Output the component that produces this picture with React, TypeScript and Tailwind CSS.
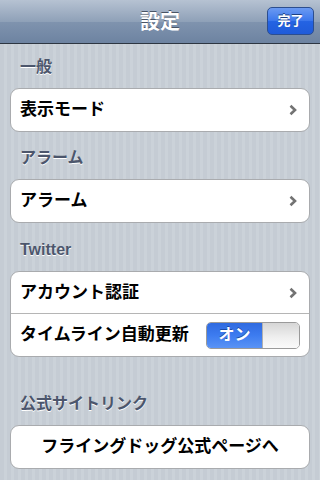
import React from "react";

const Chevron = () => (
  <svg width="8" height="12" viewBox="0 0 8 12" className="shrink-0">
    <path d="M1.5 1.8 L6 6 L1.5 10.2" fill="none" stroke="#737373" strokeWidth="2.6" strokeLinecap="butt" strokeLinejoin="miter" />
  </svg>
);

const Header = ({ children, first }: { children: React.ReactNode; first?: string }) => (
  <div
    className={`h-[20px] mb-[11px] pl-[10px] flex items-center text-[16px] font-bold text-[#4c566c] [text-shadow:0_1px_0_#ffffff] ${first ?? ""}`}
  >
    {children}
  </div>
);

const Group = ({ children }: { children: React.ReactNode }) => (
  <div className="bg-white border border-[#a9abae] rounded-[9px] overflow-hidden">{children}</div>
);

const Row = ({ label, chevron, divider }: { label: string; chevron?: boolean; divider?: boolean }) => (
  <div className={`h-[42px] flex items-center justify-between pl-[9px] pr-[12px] ${divider ? "border-b border-[#b5b5b5]" : ""}`}>
    <span className="text-[17px] font-bold text-black">{label}</span>
    {chevron && <Chevron />}
  </div>
);

export default function App() {
  return (
    <div
      className="w-[320px] h-[480px] overflow-hidden bg-[repeating-linear-gradient(90deg,#c5ccd4_0px,#c5ccd4_4px,#cbd2d9_4px,#cbd2d9_7px)]"
      style={{ fontFamily: '"Liberation Sans", "Noto Sans CJK JP", sans-serif' }}
    >
      <div className="relative h-[44px] flex items-center justify-center bg-[linear-gradient(to_bottom,#b6c2d2_0%,#8fa1b8_50%,#7f93ae_52%,#6d83a1_100%)] border-b border-[#2d3642]">
        <span className="text-[20px] font-bold text-white [text-shadow:0_-1px_0_#4a5566]">設定</span>
        <div className="absolute right-[6px] top-[7px] w-[47px] h-[28px] rounded-[5px] border border-[#2c4e8f] bg-[linear-gradient(to_bottom,#6b9af2_0%,#3a76ec_50%,#2463e3_52%,#1f5bd9_100%)] flex items-center justify-center">
          <span className="text-[13px] font-bold text-white [text-shadow:0_-1px_0_#1d3f80]">完了</span>
        </div>
      </div>

      <div className="px-[10px]">
        <Header first="mt-[13px]">一般</Header>
        <Group>
          <Row label="表示モード" chevron />
        </Group>

        <Header first="mt-[16px]">アラーム</Header>
        <Group>
          <Row label="アラーム" chevron />
        </Group>

        <Header first="mt-[17px]">Twitter</Header>
        <Group>
          <Row label="アカウント認証" chevron divider />
          <div className="h-[42px] flex items-center justify-between pl-[9px] pr-[9px]">
            <span className="text-[17px] font-bold text-black">タイムライン自動更新</span>
            <div className="w-[94px] h-[27px] rounded-[5px] border border-[#9a9a9a] overflow-hidden flex">
              <div className="w-[55px] h-full bg-[linear-gradient(to_bottom,#2f6ae0_0%,#3d7cf0_50%,#5a93f5_100%)] flex items-center justify-center">
                <span className="text-[16px] font-bold text-white [text-shadow:0_-1px_0_#1d4aa8]">オン</span>
              </div>
              <div className="flex-1 h-full bg-[linear-gradient(to_bottom,#d6d6d6_0%,#f0f0f0_60%,#fafafa_100%)] border-l border-[#b0b0b0]" />
            </div>
          </div>
        </Group>

        <Header first="mt-[37px]">公式サイトリンク</Header>
        <Group>
          <div className="h-[42px] flex items-center justify-center">
            <span className="text-[17px] font-bold text-black">フライングドッグ公式ページへ</span>
          </div>
        </Group>
      </div>
    </div>
  );
}
